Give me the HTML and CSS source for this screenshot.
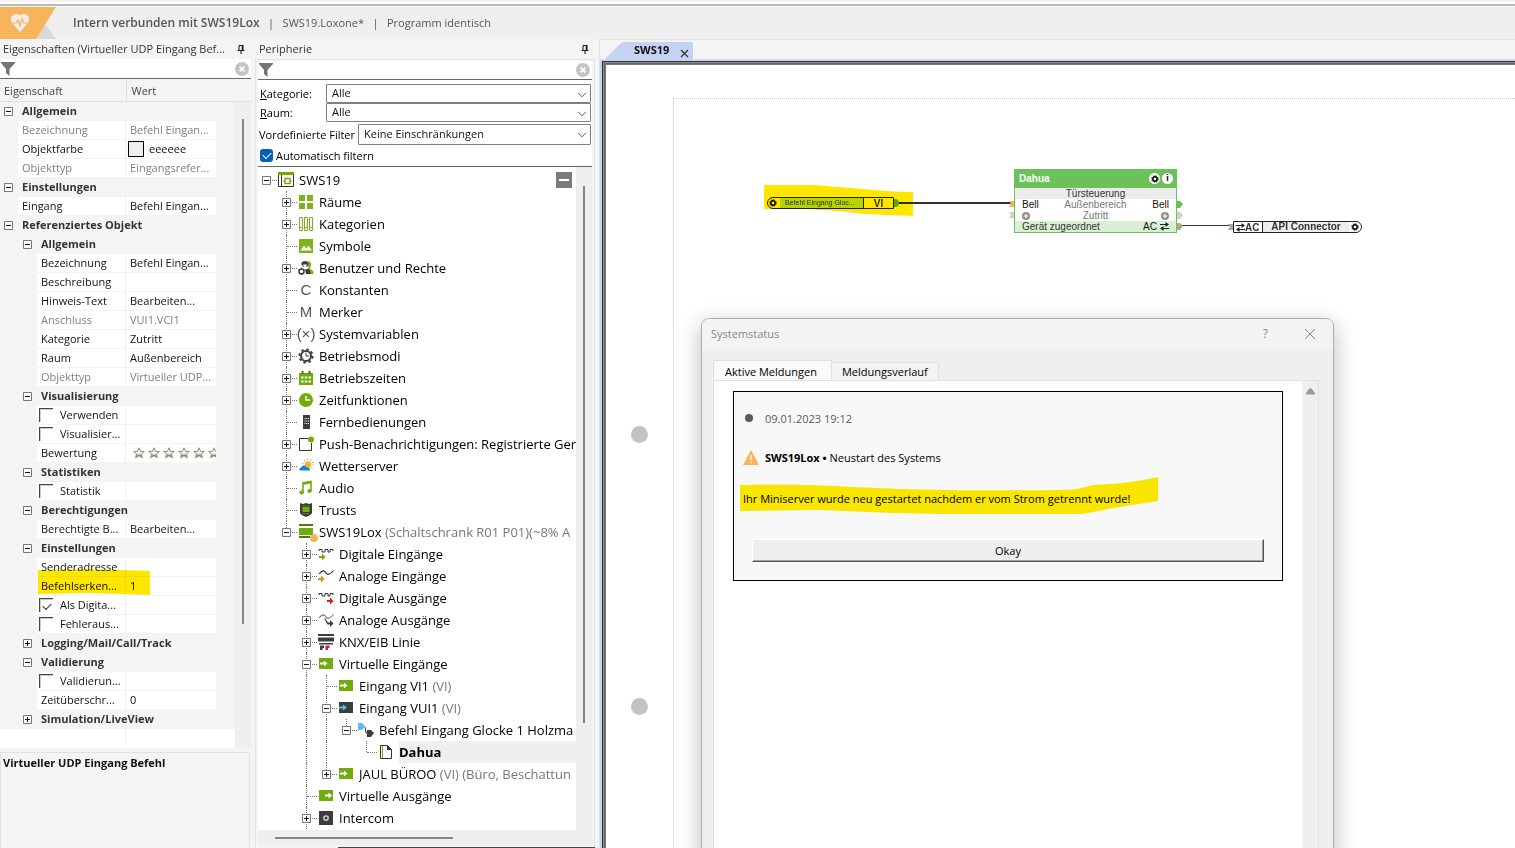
FILE: index.html
```html
<!DOCTYPE html>
<html lang="de">
<head>
<meta charset="utf-8">
<title>Intern verbunden mit SWS19Lox</title>
<link rel="stylesheet" href="styles.css">
</head>
<body>
<svg class="defs" aria-hidden="true">
  <symbol id="funnel" viewBox="0 0 16 16"><path d="M1 1h14v1L9.500 8v7L6 12V8L1 2z" fill="#757575"/></symbol>
  <symbol id="clear" viewBox="0 0 14 14"><circle cx="7" cy="7" r="7" fill="#c3c3c3"/><path d="M4.600 4.600l4.800 4.800M9.400 4.600L4.600 9.400" stroke="#fff" stroke-width="1.900"/></symbol>
  <symbol id="pin" viewBox="0 0 8 9"><path d="M2 .5h4V5M2 .5V5M5.200 .5V5M.5 5.500h7M4 5.500V9" fill="none" stroke="#222" stroke-width="1.100"/></symbol>
  <symbol id="minus" viewBox="0 0 9 9"><path d="M.5.5h8v8h-8z" fill="#fff" stroke="#777"/><path d="M2 4.500h5" stroke="#111"/></symbol>
  <symbol id="plus" viewBox="0 0 9 9"><path d="M.5.5h8v8h-8z" fill="#fff" stroke="#777"/><path d="M2 4.500h5M4.500 2v5" stroke="#111"/></symbol>
  <symbol id="chev" viewBox="0 0 10 6"><path d="M1 .8l4 4 4-4" fill="none" stroke="#555"/></symbol>
  <symbol id="star" viewBox="0 0 12 12"><path d="M6 .8l1.500 3.500 3.800.2-2.900 2.400 1 3.900L6 8.700l-3.400 2.100 1-3.900L.7 4.500l3.800-.2z" fill="#f7f4ec" stroke="#8f887c"/><path d="M3 10.500l1-3h4l1 3-3-1.800z" fill="#8f887c"/></symbol>
  <symbol id="gear" viewBox="0 0 16 16"><circle cx="8" cy="8" r="5" fill="none" stroke="#3c3c3c" stroke-width="2"/><circle cx="8" cy="8" r="6.700" fill="none" stroke="#3c3c3c" stroke-width="1.800" stroke-dasharray="2.630 2.630"/><path d="M8 5v3h3" fill="none" stroke="#3c3c3c"/></symbol>
  <symbol id="cog" viewBox="0 0 8 8"><circle cx="4" cy="4" r="2.200" fill="none" stroke="#000" stroke-width="1.500"/><circle cx="4" cy="4" r="3.300" fill="none" stroke="#000" stroke-width=".9" stroke-dasharray="1.300 1.300"/></symbol>
  <symbol id="swap" viewBox="0 0 9 9"><path d="M0 2.500h6M3 6.500h6" stroke="#222" stroke-width="1.200"/><path d="M5.500 0L9 2.500 5.500 5zM3.500 4L0 6.500 3.500 9z" fill="#222"/></symbol>
  <symbol id="addpin" viewBox="0 0 8 8"><circle cx="4" cy="4" r="4" fill="#8c8c8c"/><path d="M1.700 4h4.600M4 1.700v4.600" stroke="#fff" stroke-width="1.200"/></symbol>
  <symbol id="i-project" viewBox="0 0 16 16"><path d="M.5 1v13.500h15V1M3.500 3v11" fill="#fff" stroke="#333"/><path d="M0 0h16v3H0z" fill="#72a800"/><path d="M7 6.500h5v5H7zM5.500 9H7M12 9h1.500" fill="none" stroke="#72a800" stroke-width="1.400"/></symbol>
  <symbol id="i-rooms" viewBox="0 0 16 16"><path d="M1 1h6v6H1zM9 1h6v6H9zM1 9h6v6H1zM9 9h6v6H9z" fill="#7db41e"/></symbol>
  <symbol id="i-cats" viewBox="0 0 16 16"><path d="M1.500 1.500h3v13h-3zM6.500 1.500h3v13h-3zM11.500 1.500h3v13h-3zM1.500 11.500h3M6.500 11.500h3M11.500 11.500h3" fill="#fff" stroke="#7db41e"/></symbol>
  <symbol id="i-symbols" viewBox="0 0 16 16"><path d="M1 1h14v14H1z" fill="#7db41e"/><path d="M2.500 12.500l3.500-5 2.500 3 2-3 3.500 5z" fill="#fff"/></symbol>
  <symbol id="i-users" viewBox="0 0 16 16"><path d="M9 1.500c3-1 4.500 1 4 4l-1 3 3.500 3V14H12z" fill="#7db41e"/><path d="M3.500 2.500l2.500-1.500 3 .5 1.500 2-.5 2.500-2 1-3-.5-1.500-2z" fill="#3c3c3c"/><path d="M5 4.500h4l-1 2.500H6z" fill="#fff"/><path d="M7 9.500l4-1 2 5.500H8z" fill="#3c3c3c"/><circle cx="3.500" cy="11.500" r="2.500" fill="#fff" stroke="#3c3c3c" stroke-width="1.500"/><path d="M3.500 7.800v1.500M.5 9l1 1M6.500 9l-1 1M3.500 13.500V15" stroke="#3c3c3c"/></symbol>
  <symbol id="i-calendar" viewBox="0 0 16 16"><path d="M1 3h14v12H1z" fill="#72ab0c"/><path d="M4.500 1v3M11.500 1v3" stroke="#4d7708" stroke-width="2"/><path d="M3 7.500h10M3 11.500h10" stroke="#fff" stroke-width="2" stroke-dasharray="2.500 1.250"/></symbol>
  <symbol id="i-clock" viewBox="0 0 16 16"><circle cx="8" cy="8" r="7" fill="#72ab0c"/><path d="M8 4v4h4" fill="none" stroke="#fff" stroke-width="1.400"/></symbol>
  <symbol id="i-remote" viewBox="0 0 16 16"><path d="M5 1h7v14H5z" fill="#3c3c3c"/><path d="M6.500 4.500h4.500M6.500 7h4.500M6.500 9.500h4.500" stroke="#fff" stroke-dasharray="1 .75"/></symbol>
  <symbol id="i-push" viewBox="0 0 16 16"><path d="M10 2.500H1.500v12h12V7" fill="none" stroke="#333"/><circle cx="13" cy="3.500" r="3" fill="#72ab0c"/></symbol>
  <symbol id="i-weather" viewBox="0 0 16 16"><circle cx="10" cy="6.500" r="3.200" fill="#f9b233"/><circle cx="10" cy="6.500" r="5.200" fill="none" stroke="#f9b233" stroke-width="1.800" stroke-dasharray="1 2.270"/><path d="M2 12.500c-1.500-2 .5-3.500 1.500-3 1-3 4.500-2.500 5 0 2-.7 4 1.500 3 3z" fill="#1583cf"/></symbol>
  <symbol id="i-audio" viewBox="0 0 16 16"><path d="M5 12.500V3l8-1.500V11" fill="none" stroke="#72ab0c" stroke-width="1.600"/><path d="M5 2.500l8-1.500v2.500L5 5z" fill="#72ab0c"/><ellipse cx="3.600" cy="12.600" rx="2.300" ry="2" fill="#72ab0c"/><ellipse cx="11.500" cy="11" rx="2.200" ry="2" fill="#72ab0c"/></symbol>
  <symbol id="i-trust" viewBox="0 0 16 16"><path d="M2 1l3 1 3-1 3 1 3-1v10c-1 2.500-4 3-6 4-2-1-5-1.500-6-4z" fill="#3c3c3c"/><path d="M4.500 5h7v5h-7z" fill="#72ab0c"/><path d="M4.500 4h7M4.500 11.500h7" stroke="#5f8f0c" stroke-width=".8"/></symbol>
  <symbol id="i-server" viewBox="0 0 20 20"><path d="M1 2h14v2H1zM1 14h11v2H1z" fill="#4b7a06"/><path d="M1 6h14v7H1z" fill="#72ab0c"/><circle cx="16" cy="16" r="4" fill="#f7b45a"/></symbol>
  <symbol id="i-din" viewBox="0 0 16 16"><path d="M1 5V3.500h3V6h3V3.500h3V6h2V3.500h3V5" fill="none" stroke="#333"/><path d="M1 10h3V7.500L7.500 11 4 14.500V12H1z" fill="#72ab0c"/></symbol>
  <symbol id="i-ain" viewBox="0 0 16 16"><path d="M1 6c4-5 6-3 7-1s4 2 7.500-2.500" fill="none" stroke="#333" stroke-width="1.200"/><path d="M0 10h3V7.500L6.500 11 3 14.500V12H0z" fill="#dd9418"/></symbol>
  <symbol id="i-dout" viewBox="0 0 16 16"><path d="M1 5V3.500h3V6h3V3.500h3V6h2V3.500h3V5" fill="none" stroke="#333"/><path d="M9 10h3V7.500l3.500 3.500L12 14.500V12H9z" fill="#d81f1f"/></symbol>
  <symbol id="i-aout" viewBox="0 0 16 16"><path d="M1 6c4-5 6-3 7-1s4 2 7.500-2.500" fill="none" stroke="#777" stroke-width="1.200"/><path d="M7 6l3 4.500h2V8l3.500 3.500L12 15v-2.500H9.500L6.500 7z" fill="#3c3c3c"/></symbol>
  <symbol id="i-knx" viewBox="0 0 16 16"><path d="M0 0h16v2H0zM0 3.500h16v4H0zM1 9h14v1.500H1z" fill="#3c3c3c"/><path d="M2 11.500h4V14H4.500v2H2z" fill="#3c3c3c"/><path d="M7.500 11.500h4V14H10v2H7.500z" fill="#d81f1f"/></symbol>
  <symbol id="i-vin" viewBox="0 0 16 16"><path d="M1 2h14v11H1z" fill="#72ab0c"/><path d="M2 6.500h4V4.500l3.500 3L6 10.500v-2H2z" fill="#fff"/></symbol>
  <symbol id="i-vudp" viewBox="0 0 16 16"><path d="M1 2h14v11H1z" fill="#3c3c3c"/><path d="M1 6.500h4V4.500l4 3-4 3v-2H1z" fill="#5cbcf6"/></symbol>
  <symbol id="i-vout" viewBox="0 0 16 16"><path d="M1 2h14v11H1z" fill="#72ab0c"/><path d="M7 6.500h3.500V4.500l3.500 3-3.500 3v-2H7z" fill="#fff"/></symbol>
  <symbol id="i-cmd" viewBox="0 0 16 16"><path d="M0 1h4l3 3-3 4H0z" fill="#5cbcf6"/><path d="M7 5l1 6h2" fill="none" stroke="#333"/><path d="M9 8h4l3 3-3 4H9z" fill="#3c3c3c"/></symbol>
  <symbol id="i-page" viewBox="0 0 16 16"><path d="M2.500 1.500h7l4 4v9h-11z" fill="#fff" stroke="#333"/><path d="M9 1l5 5H9z" fill="#333"/><path d="M4.500 2v12" stroke="#72ab0c"/></symbol>
  <symbol id="i-intercom" viewBox="0 0 16 16"><path d="M1 1h14v14H1z" fill="#3c3c3c"/><circle cx="8" cy="8" r="2.200" fill="none" stroke="#ddd" stroke-width="1.300"/></symbol>
</svg>

<div class="ribbon-edge"></div>
<header class="status">
  <svg class="status-logo" viewBox="0 0 63 32" width="63" height="32"><path d="M45 17l11 15H36z" fill="#d8d8d8"/><path d="M0 0h56L36 32H0z" fill="#f7b45a"/><path d="M20 25L11.500 15.500C9 9.500 15 3.500 20 8.500c5-5 11 1 8.500 7z" fill="#f1ede6"/><path d="M10 16h6l2-3 2 6 2-7 2 4h6" fill="none" stroke="#f7b45a" stroke-width="1.200"/></svg>
  <strong>Intern verbunden mit SWS19Lox</strong><span class="bar">|</span><span>SWS19.Loxone*</span><span class="bar">|</span><span>Programm identisch</span>
</header>

<div class="workspace">
  <section class="props">
    <h2 class="pane-title"><span>Eigenschaften (Virtueller UDP Eingang Bef...</span><svg width="8" height="9"><use href="#pin"/></svg></h2>
    <div class="filter"><svg width="16" height="16"><use href="#funnel"/></svg><input type="text" aria-label="Eigenschaften filtern"><button class="plain" aria-label="Filter leeren"><svg width="14" height="14"><use href="#clear"/></svg></button></div>
    <div class="props-head"><span>Eigenschaft</span><span>Wert</span></div>
    <div class="props-body">
      <div class="grid-wrap">
      <table class="grid">
        <colgroup><col class="c-a"><col class="c-b"><col class="c-name"><col class="c-val"></colgroup>
        <tr class="grp"><td><button class="plain tg" aria-label="Zuklappen"><svg width="9" height="9"><use href="#minus"/></svg></button></td><th colspan="3">Allgemein</th></tr>
        <tr class="dim"><td class="sp"></td><td colspan="2">Bezeichnung</td><td>Befehl Eingan...</td></tr>
        <tr><td class="sp"></td><td colspan="2">Objektfarbe</td><td class="colour"><span class="swatch"></span>eeeeee</td></tr>
        <tr class="dim"><td class="sp"></td><td colspan="2">Objekttyp</td><td>Eingangsrefer...</td></tr>
        <tr class="grp"><td><button class="plain tg" aria-label="Zuklappen"><svg width="9" height="9"><use href="#minus"/></svg></button></td><th colspan="3">Einstellungen</th></tr>
        <tr><td class="sp"></td><td colspan="2">Eingang</td><td>Befehl Eingan...</td></tr>
        <tr class="grp"><td><button class="plain tg" aria-label="Zuklappen"><svg width="9" height="9"><use href="#minus"/></svg></button></td><th colspan="3">Referenziertes Objekt</th></tr>
        <tr class="grp"><td></td><td><button class="plain tg" aria-label="Zuklappen"><svg width="9" height="9"><use href="#minus"/></svg></button></td><th colspan="2">Allgemein</th></tr>
        <tr><td class="sp" colspan="2"></td><td>Bezeichnung</td><td>Befehl Eingan...</td></tr>
        <tr><td class="sp" colspan="2"></td><td>Beschreibung</td><td></td></tr>
        <tr><td class="sp" colspan="2"></td><td>Hinweis-Text</td><td>Bearbeiten...</td></tr>
        <tr class="dim"><td class="sp" colspan="2"></td><td>Anschluss</td><td>VUI1.VCI1</td></tr>
        <tr><td class="sp" colspan="2"></td><td>Kategorie</td><td>Zutritt</td></tr>
        <tr><td class="sp" colspan="2"></td><td>Raum</td><td>Außenbereich</td></tr>
        <tr class="dim"><td class="sp" colspan="2"></td><td>Objekttyp</td><td>Virtueller UDP...</td></tr>
        <tr class="grp"><td></td><td><button class="plain tg" aria-label="Zuklappen"><svg width="9" height="9"><use href="#minus"/></svg></button></td><th colspan="2">Visualisierung</th></tr>
        <tr><td class="sp" colspan="2"></td><td class="chk"><label><input type="checkbox">Verwenden</label></td><td></td></tr>
        <tr><td class="sp" colspan="2"></td><td class="chk"><label><input type="checkbox">Visualisier...</label></td><td></td></tr>
        <tr><td class="sp" colspan="2"></td><td>Bewertung</td><td><div class="stars"><svg width="12" height="12"><use href="#star"/></svg><svg width="12" height="12"><use href="#star"/></svg><svg width="12" height="12"><use href="#star"/></svg><svg width="12" height="12"><use href="#star"/></svg><svg width="12" height="12"><use href="#star"/></svg><svg width="12" height="12"><use href="#star"/></svg></div></td></tr>
        <tr class="grp"><td></td><td><button class="plain tg" aria-label="Zuklappen"><svg width="9" height="9"><use href="#minus"/></svg></button></td><th colspan="2">Statistiken</th></tr>
        <tr><td class="sp" colspan="2"></td><td class="chk"><label><input type="checkbox">Statistik</label></td><td></td></tr>
        <tr class="grp"><td></td><td><button class="plain tg" aria-label="Zuklappen"><svg width="9" height="9"><use href="#minus"/></svg></button></td><th colspan="2">Berechtigungen</th></tr>
        <tr><td class="sp" colspan="2"></td><td>Berechtigte B...</td><td>Bearbeiten...</td></tr>
        <tr class="grp"><td></td><td><button class="plain tg" aria-label="Zuklappen"><svg width="9" height="9"><use href="#minus"/></svg></button></td><th colspan="2">Einstellungen</th></tr>
        <tr><td class="sp" colspan="2"></td><td>Senderadresse</td><td></td></tr>
        <tr><td class="sp" colspan="2"></td><td class="marked">Befehlserken...<svg class="marker" width="114" height="28" viewBox="0 0 114 28"><path d="M1 2L50 1l63 2v24l-30-1-32-1L1 26z" fill="#ffe600"/></svg></td><td>1</td></tr>
        <tr><td class="sp" colspan="2"></td><td class="chk"><label><input type="checkbox" checked>Als Digita...</label></td><td></td></tr>
        <tr><td class="sp" colspan="2"></td><td class="chk"><label><input type="checkbox">Fehleraus...</label></td><td></td></tr>
        <tr class="grp"><td></td><td><button class="plain tg" aria-label="Aufklappen"><svg width="9" height="9"><use href="#plus"/></svg></button></td><th colspan="2">Logging/Mail/Call/Track</th></tr>
        <tr class="grp"><td></td><td><button class="plain tg" aria-label="Zuklappen"><svg width="9" height="9"><use href="#minus"/></svg></button></td><th colspan="2">Validierung</th></tr>
        <tr><td class="sp" colspan="2"></td><td class="chk"><label><input type="checkbox">Validierun...</label></td><td></td></tr>
        <tr><td class="sp" colspan="2"></td><td>Zeitüberschr...</td><td>0</td></tr>
        <tr class="grp"><td></td><td><button class="plain tg" aria-label="Aufklappen"><svg width="9" height="9"><use href="#plus"/></svg></button></td><th colspan="2">Simulation/LiveView</th></tr>
      </table>
      <div class="grid-rest"></div>
      </div>
      <div class="vscroll"><i class="props-thumb"></i></div>
    </div>
    <div class="desc">Virtueller UDP Eingang Befehl</div>
  </section>

  <section class="peri">
    <h2 class="pane-title"><span>Peripherie</span><svg width="8" height="9"><use href="#pin"/></svg></h2>
    <div class="peri-box">
      <div class="filter"><svg width="16" height="16"><use href="#funnel"/></svg><input type="text" aria-label="Peripherie filtern"><button class="plain" aria-label="Filter leeren"><svg width="14" height="14"><use href="#clear"/></svg></button></div>
      <div class="form">
        <div class="field"><label for="kat"><u>K</u>ategorie:</label><div class="sel"><select id="kat"><option>Alle</option></select><svg width="10" height="6"><use href="#chev"/></svg></div></div>
        <div class="field"><label for="raum"><u>R</u>aum:</label><div class="sel"><select id="raum"><option>Alle</option></select><svg width="10" height="6"><use href="#chev"/></svg></div></div>
        <div class="field wide"><label for="vor">Vordefinierte Filter</label><div class="sel"><select id="vor"><option>Keine Einschränkungen</option></select><svg width="10" height="6"><use href="#chev"/></svg></div></div>
        <label class="auto"><input type="checkbox" checked>Automatisch filtern</label>
      </div>
      <div class="tree-area">
        <div class="tree">
          <div class="row"><span class="c s"><button class="plain" aria-label="Zuklappen"><svg width="9" height="9"><use href="#minus"/></svg></button></span><svg class="ic" width="16" height="16"><use href="#i-project"/></svg><span class="t">SWS19</span><button class="plain collapse" aria-label="Alles zuklappen"><svg width="16" height="16" viewBox="0 0 16 16"><path d="M0 0h16v16H0z" fill="#7b7b7b"/><path d="M3 8h10" stroke="#fff" stroke-width="2"/></svg></button></div>
          <div class="row"><span class="c"></span><span class="c v s"><button class="plain" aria-label="Aufklappen"><svg width="9" height="9"><use href="#plus"/></svg></button></span><svg class="ic" width="16" height="16"><use href="#i-rooms"/></svg><span class="t">Räume</span></div>
          <div class="row"><span class="c"></span><span class="c v s"><button class="plain" aria-label="Aufklappen"><svg width="9" height="9"><use href="#plus"/></svg></button></span><svg class="ic" width="16" height="16"><use href="#i-cats"/></svg><span class="t">Kategorien</span></div>
          <div class="row"><span class="c"></span><span class="c v s"></span><svg class="ic" width="16" height="16"><use href="#i-symbols"/></svg><span class="t">Symbole</span></div>
          <div class="row"><span class="c"></span><span class="c v s"><button class="plain" aria-label="Aufklappen"><svg width="9" height="9"><use href="#plus"/></svg></button></span><svg class="ic" width="16" height="16"><use href="#i-users"/></svg><span class="t">Benutzer und Rechte</span></div>
          <div class="row"><span class="c"></span><span class="c v s"></span><span class="ic glyph">C</span><span class="t">Konstanten</span></div>
          <div class="row"><span class="c"></span><span class="c v s"></span><span class="ic glyph">M</span><span class="t">Merker</span></div>
          <div class="row"><span class="c"></span><span class="c v s"><button class="plain" aria-label="Aufklappen"><svg width="9" height="9"><use href="#plus"/></svg></button></span><span class="ic glyph">(×)</span><span class="t">Systemvariablen</span></div>
          <div class="row"><span class="c"></span><span class="c v s"><button class="plain" aria-label="Aufklappen"><svg width="9" height="9"><use href="#plus"/></svg></button></span><svg class="ic" width="16" height="16"><use href="#gear"/></svg><span class="t">Betriebsmodi</span></div>
          <div class="row"><span class="c"></span><span class="c v s"><button class="plain" aria-label="Aufklappen"><svg width="9" height="9"><use href="#plus"/></svg></button></span><svg class="ic" width="16" height="16"><use href="#i-calendar"/></svg><span class="t">Betriebszeiten</span></div>
          <div class="row"><span class="c"></span><span class="c v s"><button class="plain" aria-label="Aufklappen"><svg width="9" height="9"><use href="#plus"/></svg></button></span><svg class="ic" width="16" height="16"><use href="#i-clock"/></svg><span class="t">Zeitfunktionen</span></div>
          <div class="row"><span class="c"></span><span class="c v s"></span><svg class="ic" width="16" height="16"><use href="#i-remote"/></svg><span class="t">Fernbedienungen</span></div>
          <div class="row"><span class="c"></span><span class="c v s"><button class="plain" aria-label="Aufklappen"><svg width="9" height="9"><use href="#plus"/></svg></button></span><svg class="ic" width="16" height="16"><use href="#i-push"/></svg><span class="t">Push-Benachrichtigungen: Registrierte Ger</span></div>
          <div class="row"><span class="c"></span><span class="c v s"><button class="plain" aria-label="Aufklappen"><svg width="9" height="9"><use href="#plus"/></svg></button></span><svg class="ic" width="16" height="16"><use href="#i-weather"/></svg><span class="t">Wetterserver</span></div>
          <div class="row"><span class="c"></span><span class="c v s"></span><svg class="ic" width="16" height="16"><use href="#i-audio"/></svg><span class="t">Audio</span></div>
          <div class="row"><span class="c"></span><span class="c v s"></span><svg class="ic" width="16" height="16"><use href="#i-trust"/></svg><span class="t">Trusts</span></div>
          <div class="row"><span class="c"></span><span class="c v last s"><button class="plain" aria-label="Zuklappen"><svg width="9" height="9"><use href="#minus"/></svg></button></span><svg class="ic big" width="20" height="20"><use href="#i-server"/></svg><span class="t">SWS19Lox <em>(Schaltschrank R01 P01)(~8% A</em></span></div>
          <div class="row"><span class="c"></span><span class="c"></span><span class="c v s"><button class="plain" aria-label="Aufklappen"><svg width="9" height="9"><use href="#plus"/></svg></button></span><svg class="ic" width="16" height="16"><use href="#i-din"/></svg><span class="t">Digitale Eingänge</span></div>
          <div class="row"><span class="c"></span><span class="c"></span><span class="c v s"><button class="plain" aria-label="Aufklappen"><svg width="9" height="9"><use href="#plus"/></svg></button></span><svg class="ic" width="16" height="16"><use href="#i-ain"/></svg><span class="t">Analoge Eingänge</span></div>
          <div class="row"><span class="c"></span><span class="c"></span><span class="c v s"><button class="plain" aria-label="Aufklappen"><svg width="9" height="9"><use href="#plus"/></svg></button></span><svg class="ic" width="16" height="16"><use href="#i-dout"/></svg><span class="t">Digitale Ausgänge</span></div>
          <div class="row"><span class="c"></span><span class="c"></span><span class="c v s"><button class="plain" aria-label="Aufklappen"><svg width="9" height="9"><use href="#plus"/></svg></button></span><svg class="ic" width="16" height="16"><use href="#i-aout"/></svg><span class="t">Analoge Ausgänge</span></div>
          <div class="row"><span class="c"></span><span class="c"></span><span class="c v s"><button class="plain" aria-label="Aufklappen"><svg width="9" height="9"><use href="#plus"/></svg></button></span><svg class="ic" width="16" height="16"><use href="#i-knx"/></svg><span class="t">KNX/EIB Linie</span></div>
          <div class="row"><span class="c"></span><span class="c"></span><span class="c v s"><button class="plain" aria-label="Zuklappen"><svg width="9" height="9"><use href="#minus"/></svg></button></span><svg class="ic" width="16" height="16"><use href="#i-vin"/></svg><span class="t">Virtuelle Eingänge</span></div>
          <div class="row"><span class="c"></span><span class="c"></span><span class="c v"></span><span class="c v s"></span><svg class="ic" width="16" height="16"><use href="#i-vin"/></svg><span class="t">Eingang VI1 <em>(VI)</em></span></div>
          <div class="row"><span class="c"></span><span class="c"></span><span class="c v"></span><span class="c v s"><button class="plain" aria-label="Zuklappen"><svg width="9" height="9"><use href="#minus"/></svg></button></span><svg class="ic" width="16" height="16"><use href="#i-vudp"/></svg><span class="t">Eingang VUI1 <em>(VI)</em></span></div>
          <div class="row"><span class="c"></span><span class="c"></span><span class="c v"></span><span class="c v"></span><span class="c v last s"><button class="plain" aria-label="Zuklappen"><svg width="9" height="9"><use href="#minus"/></svg></button></span><svg class="ic" width="16" height="16"><use href="#i-cmd"/></svg><span class="t">Befehl Eingang Glocke 1 Holzma</span></div>
          <div class="row current"><span class="c"></span><span class="c"></span><span class="c v"></span><span class="c v"></span><span class="c"></span><span class="c v last s"></span><svg class="ic" width="16" height="16"><use href="#i-page"/></svg><span class="t">Dahua</span></div>
          <div class="row"><span class="c"></span><span class="c"></span><span class="c v"></span><span class="c v last s"><button class="plain" aria-label="Aufklappen"><svg width="9" height="9"><use href="#plus"/></svg></button></span><svg class="ic" width="16" height="16"><use href="#i-vin"/></svg><span class="t">JAUL BÜROO <em>(VI) (Büro, Beschattun</em></span></div>
          <div class="row"><span class="c"></span><span class="c"></span><span class="c v s"></span><svg class="ic" width="16" height="16"><use href="#i-vout"/></svg><span class="t">Virtuelle Ausgänge</span></div>
          <div class="row"><span class="c"></span><span class="c"></span><span class="c v s"><button class="plain" aria-label="Aufklappen"><svg width="9" height="9"><use href="#plus"/></svg></button></span><svg class="ic" width="16" height="16"><use href="#i-intercom"/></svg><span class="t">Intercom</span></div>
        </div>
        <div class="vscroll"><i class="tree-thumb"></i></div>
      </div>
      <div class="hscroll"><i></i></div>
    </div>
  </section>

  <main class="editor">
    <div class="tabs">
      <div class="tab"><svg width="22" height="18" viewBox="0 0 22 18"><path d="M0 18L16 2q2-2 6-2v18z" fill="#c5d3f2"/></svg><span>SWS19</span><button class="plain" aria-label="Tab schließen"><svg width="9" height="9" viewBox="0 0 9 9"><path d="M1 1l7 7M8 1L1 8" stroke="#333" stroke-width="1.300"/></svg></button></div>
    </div>
    <div class="frame">
      <div class="canvas">
        <div class="sheet"></div>
        <i class="dot upper"></i><i class="dot lower"></i>
        <svg class="wires" width="800" height="240" viewBox="606 65 800 240">
          <path d="M899 203h112" stroke="#333" stroke-width="2"/>
          <path d="M1181 225.500h50" stroke="#333"/>
          <path d="M893 199h3q3 1 3 4t-3 4h-3z" fill="#58b83f"/>
          <path d="M1009 201h6v6h-6l2-3z" fill="#f7b45a"/>
          <path d="M1009 212h6v6h-6l2-3z" fill="#d0d0cc"/>
          <path d="M1177 201h3l3 3-3 4h-3z" fill="#6ac259"/>
          <path d="M1177 212h3l3 3-3 4h-3z" fill="#d0d0cc"/>
          <path d="M1177 223h3l3 3-3 4h-3z" fill="#b5a48c"/>
          <path d="M1228 224h6v6h-6l2-3z" fill="#b5a48c"/>
        </svg>
        <div class="vi"><svg width="8" height="8"><use href="#cog"/></svg><span class="vi-name">Befehl Eingang Gloc...</span><span class="vi-type">VI</span></div>
        <svg class="vi-marker" width="150" height="32" viewBox="0 0 150 32"><path d="M0 0h50l60 5q20 2 39 2v24l-48-2q-30-4-60-5H0z" fill="#ffe600"/></svg>
        <div class="block">
          <div class="block-head"><b>Dahua</b><span class="round"><svg width="8" height="8"><use href="#cog"/></svg></span><span class="round">i</span></div>
          <div class="block-row type"><span></span><span>Türsteuerung</span><span></span></div>
          <div class="block-row"><span>Bell</span><span class="soft">Außenbereich</span><span>Bell</span></div>
          <div class="block-row"><span><svg width="8" height="8"><use href="#addpin"/></svg></span><span class="soft">Zutritt</span><span><svg width="8" height="8"><use href="#addpin"/></svg></span></div>
          <div class="block-row foot"><span>Gerät zugeordnet</span><span>AC <svg width="9" height="9"><use href="#swap"/></svg></span></div>
        </div>
        <div class="api"><span class="api-ac"><svg width="9" height="9"><use href="#swap"/></svg>AC</span><span class="api-name">API Connector</span><svg width="8" height="8"><use href="#cog"/></svg></div>

        <section class="dialog" role="dialog" aria-labelledby="dlg">
          <header class="dialog-bar"><h1 id="dlg">Systemstatus</h1><button class="plain help" aria-label="Hilfe">?</button><button class="plain" aria-label="Schließen"><svg width="12" height="12" viewBox="0 0 12 12"><path d="M1 1l10 10M11 1L1 11" stroke="#888"/></svg></button></header>
          <div class="dialog-main">
            <div class="dtabs"><button class="dtab on">Aktive Meldungen</button><button class="dtab">Meldungsverlauf</button></div>
            <div class="dpage">
              <article class="card">
                <div class="line date"><svg width="16" height="10" viewBox="0 0 16 10"><circle cx="6" cy="4" r="4" fill="#555a5f"/></svg><time>09.01.2023 19:12</time></div>
                <div class="line"><svg width="16" height="16" viewBox="0 0 16 16"><path d="M8 0l8 15H0z" fill="#f7b45a"/><path d="M8 5v5M8 11.500v1.800" stroke="#fbe6cb" stroke-width="1.800"/></svg><p><b>SWS19Lox • </b>Neustart des Systems</p></div>
                <p class="msg">Ihr Miniserver wurde neu gestartet nachdem er vom Strom getrennt wurde!<svg width="420" height="38" viewBox="0 0 420 38"><path d="M1 9q40-1 70 0l90 4q60 2 160 1 20 0 32-5 34-1 56-6l10-2v24l-45 7q-20 4-30 6-60 1-143 0-60-1-120-4l-80 1z" fill="#ffed00"/></svg></p>
                <button class="okay">Okay</button>
              </article>
              <div class="dscroll"><svg width="9" height="7" viewBox="0 0 9 7"><path d="M3.500.5h2L9 5v1.500H0V5z" fill="#999"/></svg></div>
            </div>
          </div>
        </section>
      </div>
    </div>
  </main>
</div>
</body>
</html>
```
FILE: styles.css
```css
* { box-sizing: border-box; }
body {
  margin: 0;
  height: 100vh;
  display: flex;
  flex-direction: column;
  overflow: hidden;
  background: #f4f4f4;
  color: #111;
  font: 11px/18px "Open Sans", "Noto Sans", sans-serif;
}
svg { display: block; flex: none; }
h1, h2, p { margin: 0; font-size: inherit; font-weight: 400; }
.defs { position: absolute; width: 0; height: 0; }
.plain { border: 0; padding: 0; margin: 0; background: none; font: inherit; color: inherit; display: block; flex: none; }

/* status bar */
.ribbon-edge { flex: none; height: 7px; border-bottom: 1px solid #fafafa; background: linear-gradient(#f4f4f4 2px, #fff 2px, #fff 4px, #b9b9b9 4px); }
.status { flex: none; display: flex; align-items: center; height: 32px; background: #efefef; color: #555; }
.status strong { font-size: 12px; font-weight: 600; }
.status-logo { margin-right: 10px; }
.bar { width: 23px; text-align: center; }

.workspace { flex: 1; min-height: 0; display: flex; }
.pane-title { flex: none; display: flex; align-items: center; height: 20px; padding: 0 6px 0 3px; color: #333; }
.pane-title span { flex: 1; white-space: nowrap; }
.filter { flex: none; display: flex; align-items: center; height: 20px; background: #fff; border-bottom: 1px solid #666; padding-right: 2px; }
.filter input { flex: 1; min-width: 0; border: 0; background: none; font: inherit; outline: 0; }

/* property pane */
.props { flex: none; width: 251px; display: flex; flex-direction: column; }
.props-head { flex: none; display: flex; height: 23px; line-height: 23px; border-bottom: 1px solid #e0e0e0; color: #444; }
.props-head span { width: 126px; padding-left: 4px; }
.props-head span + span { padding-left: 5px; border-left: 1px solid #ddd; }
.props-body { flex: 1; min-height: 0; display: flex; }
.grid-wrap { flex: 1; min-width: 0; display: flex; flex-direction: column; overflow: hidden; }
.grid { width: 216px; table-layout: fixed; border-collapse: separate; border-spacing: 0; }
.c-a { width: 18px; }
.c-b { width: 19px; }
.c-name { width: 88px; }
.c-val { width: 91px; }
.grid td, .grid th { height: 19px; padding: 0 0 0 4px; line-height: 18px; text-align: left; white-space: nowrap; border-bottom: 1px solid #f4f4f4; background: #fff; }
.grid td:last-child { border-left: 1px solid #f0f0f0; }
.grid .grp td, .grid .grp th, .grid .sp { background: none; }
.grid .grp td + td { padding-left: 5px; }
.grid .sp { padding: 0; }
.grid th { color: #333; font-weight: 700; }
.grid .dim td { color: #808080; }
.grid td.colour { padding-left: 2px; }
.swatch { display: inline-block; width: 16px; height: 16px; margin-right: 5px; border: 1px solid #000; background: #eee; vertical-align: top; margin-top: 1px; }
.grid td.chk { padding-left: 2px; }
.chk label { display: flex; align-items: center; gap: 7px; }
.chk input, .auto input { appearance: none; position: relative; flex: none; margin: 0; }
.chk input { width: 14px; height: 14px; border: solid #444; border-width: 1px 0 0 1px; box-shadow: inset 1px 1px #ccc; }
.chk input:checked::after, .auto input:checked::after { content: ""; position: absolute; left: 3px; top: 4px; width: 7px; height: 4px; border: solid #222; border-width: 0 0 1px 1px; transform: rotate(-45deg); }
.stars { display: flex; gap: 3px; padding-left: 3px; overflow: hidden; }
.marked { position: relative; }
.marker { position: absolute; left: 0; top: -9px; z-index: 1; mix-blend-mode: multiply; }
.grid-rest { flex: 1; background: linear-gradient(90deg, transparent 125px, #f0f0f0 125px 126px, transparent 126px) #fff; }
.vscroll { flex: none; width: 16px; background: #efefef; display: flex; flex-direction: column; align-items: center; }
.vscroll i { width: 2px; background: #858585; }
.props-thumb { margin-top: 17px; height: 505px; }
.desc { flex: none; height: 96px; margin: 4px 1px 0 0; padding: 1px 2px; border: solid #e0e0e0; border-width: 1px 1px 0 1px; font-weight: 700; }

/* periphery pane */
.peri { flex: none; width: 340px; margin-left: 4px; padding-bottom: 1px; display: flex; flex-direction: column; background: linear-gradient(#444, #444) right bottom / 257px 1px no-repeat; }
.peri .pane-title { padding-left: 4px; }
.peri-box { flex: 1; min-height: 0; display: flex; flex-direction: column; border: 1px solid #e4e4e4; border-bottom: 0; padding: 1px 2px 2px; }
.peri .filter { height: 19px; }
.form { flex: none; display: flex; flex-direction: column; padding: 4px 1px 0 1px; height: 87px; background: #fff; border-bottom: 1px solid #666; color: #000; }
.field { display: flex; align-items: center; }
.field label { width: 67px; padding-left: 1px; }
.field.wide { margin-top: 2px; }
.field.wide label { width: 99px; padding-left: 0; white-space: nowrap; }
.sel { position: relative; flex: 1; }
.sel svg { position: absolute; right: 4px; bottom: 5px; }
.sel select { appearance: none; display: block; width: 100%; height: 19px; padding: 0 5px 1px; border: 1px solid #808080; border-radius: 1px; background: #fff; color: #111; font: inherit; line-height: 16px; }
.wide .sel select { height: 21px; }
.wide .sel svg { bottom: 7px; }
.auto { display: flex; align-items: center; gap: 3px; padding-left: 1px; height: 21px; }
.auto input { width: 13px; height: 13px; border-radius: 3px; background: #0560b6; }
.auto input:checked::after { top: 3px; border-color: #fff; }
.tree-area { flex: 1; min-height: 0; display: flex; }
.tree { flex: 1; min-width: 0; overflow: hidden; background: #fff; padding-top: 2px; font-size: 13px; color: #000; }
.row { display: flex; align-items: center; height: 22px; white-space: nowrap; }
.row .c { position: relative; flex: none; width: 20px; height: 22px; }
.row .c:first-child { width: 19px; }
.row .c::before { content: none; position: absolute; right: 10px; top: 0; bottom: 0; border-left: 1px dotted #777; }
.row .c.v::before { content: ""; }
.row .c.last::before { bottom: 11px; }
.row .c.s::after { content: ""; position: absolute; left: 10px; right: 0; top: 11px; border-top: 1px dotted #777; }
.row .c button { position: absolute; right: 6px; top: 7px; z-index: 1; }
.ic { flex: none; width: 16px; margin: 0 5px 0 1px; }
.ic.big { width: 20px; margin-right: 1px; }
.glyph { color: #555; font: 15px/22px "Liberation Sans", Arial, sans-serif; display: flex; justify-content: center; }
.row .t { flex: 1; min-width: 0; overflow: hidden; line-height: 22px; }
.row em { font-style: normal; color: #777; }
.current .t { background: #efefef; font-weight: 700; }
.collapse { margin-right: 4px; }
.tree-thumb { margin-top: 19px; height: 537px; }
.hscroll { flex: none; height: 15px; padding: 7px 0 0 17px; background: #efefef; }
.hscroll i { display: block; width: 178px; height: 2px; background: #858585; }

/* editor */
.editor { flex: 1; min-width: 0; margin-left: 4px; display: flex; flex-direction: column; border: solid #e0e0e0; border-width: 1px 0 0 1px; }
.tabs { flex: none; height: 20px; padding: 2px 0 0 4px; border-bottom: 1px solid #dcdcdc; display: flex; }
.tab { display: flex; align-items: center; height: 18px; border-right: 1px solid #fff; }
.tab span { height: 18px; line-height: 16px; padding: 0 11px 0 8px; background: #c5d3f2; font-weight: 700; }
.tab button { height: 18px; padding: 1px 4px 0 0; background: #c5d3f2; }
.tab button svg { margin-top: 4px; }
.frame { flex: 1; min-height: 0; padding: 1px 0 0 2px; background: #c5d3f2; display: flex; }
.canvas { position: relative; flex: 1; overflow: hidden; background: #fff; border: solid #333; border-width: 1px 0 0 1px; box-shadow: inset 1px 1px #8c8c8c, inset 2px 2px #666, inset 3px 3px #777; }
.sheet { position: absolute; left: 70px; top: 36px; right: 0; bottom: 0; border: dotted #ccc; border-width: 1px 0 0 1px; }
.dot { position: absolute; left: 28px; width: 17px; height: 17px; border-radius: 50%; background: #c3c3c3; }
.dot.upper { top: 364px; }
.dot.lower { top: 636px; }
.wires { position: absolute; left: 3px; top: 3px; }
.vi, .block, .api { position: absolute; font-family: "Liberation Sans", Arial, sans-serif; color: #333; }
.vi { left: 164px; top: 135px; width: 127px; height: 12px; display: flex; align-items: center; border: 1px solid #222; border-radius: 6px 0 0 6px; background: #fff; overflow: hidden; }
.vi svg { margin: 0 3px 0 1px; }
.vi-name { flex: 1; padding-left: 5px; background: #b5ebb0; font-size: 7px; line-height: 10px; white-space: nowrap; }
.vi-type { width: 30px; border-left: 1px solid #222; text-align: center; font-size: 10px; line-height: 11px; font-weight: 700; }
.vi-marker { position: absolute; left: 161px; top: 123px; mix-blend-mode: multiply; }
.block { left: 411px; top: 107px; width: 163px; border: 1px solid #6ac259; background: #fff; font-size: 10px; line-height: 11px; }
.block-head { display: flex; align-items: center; gap: 2px; height: 18px; padding: 0 3px 1px 4px; background: #6ac259; color: #fff; }
.block-head b { flex: 1; }
.round { width: 11px; height: 11px; border-radius: 50%; background: #fff; color: #000; display: flex; align-items: center; justify-content: center; font-weight: 700; font-size: 9px; }
.block-row { display: grid; grid-template-columns: 30px 1fr 30px; align-items: center; height: 11px; padding: 0 7px; text-align: center; }
.block-row span { display: flex; justify-content: center; align-items: center; gap: 3px; white-space: nowrap; }
.block-row span:first-child { justify-content: flex-start; color: #111; }
.block-row span:last-child { justify-content: flex-end; color: #111; }
.block-row .soft { color: #777; }
.block-row.type { background: #ececec; }
.block-row.foot { grid-template-columns: 1fr auto; background: #d9f0d4; }
.block-row.foot span:first-child { color: #333; }
.api { left: 630px; top: 159px; width: 129px; height: 12px; display: flex; align-items: center; border: 1px solid #222; border-radius: 0 6px 6px 0; background: #fff; font-size: 10px; line-height: 11px; }
.api > svg { margin: 0 2px; }
.api-ac { width: 29px; padding-left: 2px; display: flex; align-items: center; border-right: 1px solid #222; font-weight: 700; }
.api-name { flex: 1; background: #eee; text-align: center; font-weight: 700; line-height: 10px; }

/* status dialog */
.dialog { position: absolute; left: 98px; top: 256px; bottom: -20px; width: 633px; display: flex; flex-direction: column; border: 1px solid #aeaeae; border-radius: 8px; background: #efefef; box-shadow: 0 6px 22px rgba(0, 0, 0, .28); color: #000; overflow: hidden; }
.dialog-bar { flex: none; display: flex; align-items: center; height: 30px; padding: 0 17px 0 9px; background: #f3f3f3; color: #888; }
.dialog-bar h1 { flex: 1; }
.dialog-bar .help { margin-right: 36px; font-size: 12px; }
.dialog-main { flex: 1; min-height: 0; display: flex; flex-direction: column; padding: 11px 14px 0 11px; }
.dtabs { flex: none; display: flex; align-items: flex-end; height: 20px; }
.dtab { height: 18px; padding: 0 10px; border: 1px solid #e0e0e0; border-bottom: 0; border-left: 0; background: #f3f3f3; font: inherit; line-height: 17px; color: #000; }
.dtab.on { height: 21px; padding: 0 14px 0 11px; border-left: 1px solid #e0e0e0; background: #f9f9f9; margin-bottom: -1px; line-height: 19px; }
.dpage { flex: 1; min-height: 0; display: flex; align-items: flex-start; justify-content: space-between; border: 1px solid #e0e0e0; background: #fff; padding-left: 19px; }
.card { width: 550px; margin-top: 10px; padding: 18px 18px; border: 1px solid #000; background: #f8f8f8; }
.line { display: flex; align-items: center; gap: 6px; height: 18px; margin: 0 0 21px -9px; }
.date { color: #555a5f; }
.msg { position: relative; margin: 23px 0 31px -9px; height: 18px; white-space: nowrap; }
.msg svg { position: absolute; left: -4px; top: -14px; mix-blend-mode: multiply; }
.okay { display: block; width: 100%; height: 23px; padding: 0; border: 1px solid; border-color: #fff #555 #555 #fff; box-shadow: inset -1px -1px #a0a0a0; background: #efefef; font: inherit; color: #000; }
.dscroll { align-self: stretch; width: 16px; padding: 7px 4px; background: #efefef; }
```
